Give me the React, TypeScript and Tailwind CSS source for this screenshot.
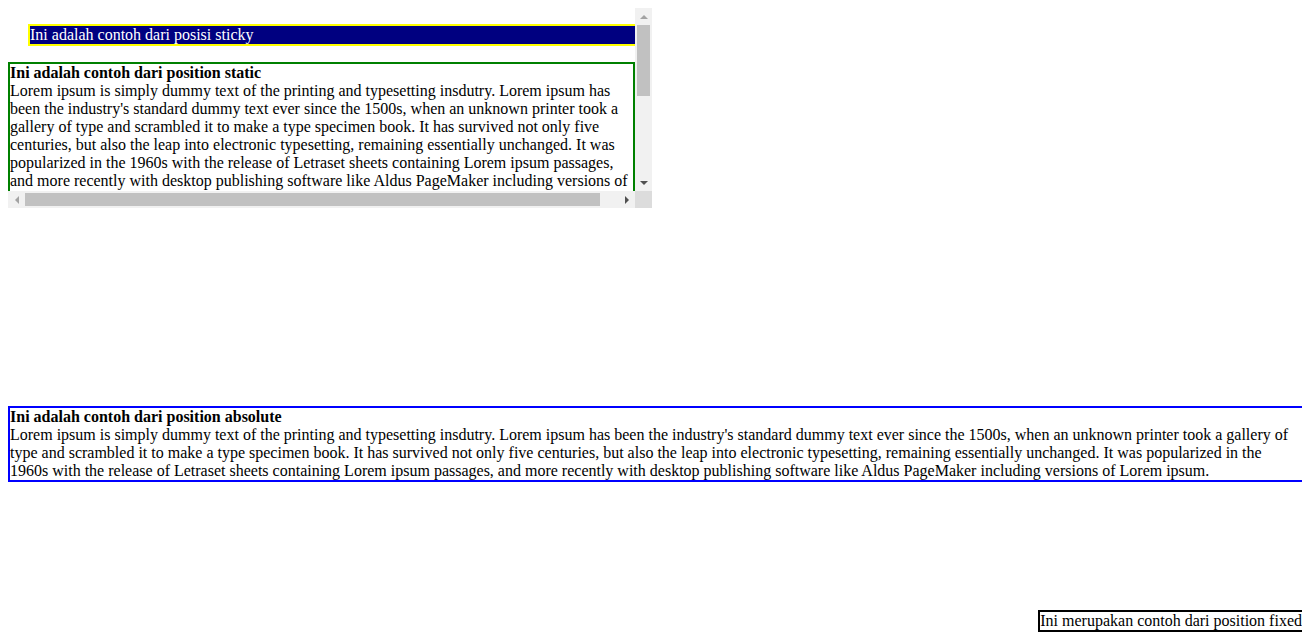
const lorem =
  "Lorem ipsum is simply dummy text of the printing and typesetting insdutry. Lorem ipsum has been the industry's standard dummy text ever since the 1500s, when an unknown printer took a gallery of type and scrambled it to make a type specimen book. It has survived not only five centuries, but also the leap into electronic typesetting, remaining essentially unchanged. It was popularized in the 1960s with the release of Letraset sheets containing Lorem ipsum passages, and more recently with desktop publishing software like Aldus PageMaker including versions of Lorem ipsum."

function Arrow({ dir }: { dir: 'up' | 'down' | 'left' | 'right' }) {
  const cls = {
    up: 'border-x-[4px] border-x-transparent border-b-[4px] border-b-[#a3a3a3]',
    down: 'border-x-[4px] border-x-transparent border-t-[4px] border-t-[#505050]',
    left: 'border-y-[4px] border-y-transparent border-r-[4px] border-r-[#a3a3a3]',
    right: 'border-y-[4px] border-y-transparent border-l-[4px] border-l-[#505050]',
  }[dir]
  return (
    <div className="w-[17px] h-[17px] shrink-0 flex items-center justify-center">
      <span className={'block w-0 h-0 ' + cls} />
    </div>
  )
}

export default function App() {
  return (
    <div className="relative w-[1302px] h-[643px] overflow-hidden bg-white text-black font-['Liberation_Serif',serif] text-base leading-[18px]">
      {/* scroll box with classic scrollbars */}
      <div className="m-2 w-[644px] h-[200px] grid grid-cols-[627px_17px] grid-rows-[183px_17px]">
        <div className="overflow-hidden">
          <div className="w-[647px]">
            <p className="sticky top-0 my-4 ml-5 w-[627px] bg-[#000080] border-2 border-[#ffff00] text-white">
              Ini adalah contoh dari posisi sticky
            </p>
            <div className="w-[627px] border-2 border-[#008000]">
              <b>Ini adalah contoh dari position static</b>
              <br />
              {lorem}
            </div>
          </div>
        </div>

        <div className="bg-[#f1f1f1] flex flex-col">
          <Arrow dir="up" />
          <div className="flex-1 px-[2px]">
            <div className="h-[71px] bg-[#c1c1c1]" />
          </div>
          <Arrow dir="down" />
        </div>

        <div className="bg-[#f1f1f1] flex">
          <Arrow dir="left" />
          <div className="flex-1 py-[2px]">
            <div className="w-[575px] h-full bg-[#c1c1c1]" />
          </div>
          <Arrow dir="right" />
        </div>

        <div className="bg-[#dcdcdc]" />
      </div>

      <div className="absolute top-[406px] left-2 w-[1300px] pr-[6px] border-2 border-[#0000ff]">
        <b>Ini adalah contoh dari position absolute</b>
        <br />
        {lorem}
      </div>

      <div className="absolute bottom-[11px] right-[-2px] border-2 border-black">
        Ini merupakan contoh dari position fixed
      </div>
    </div>
  )
}
